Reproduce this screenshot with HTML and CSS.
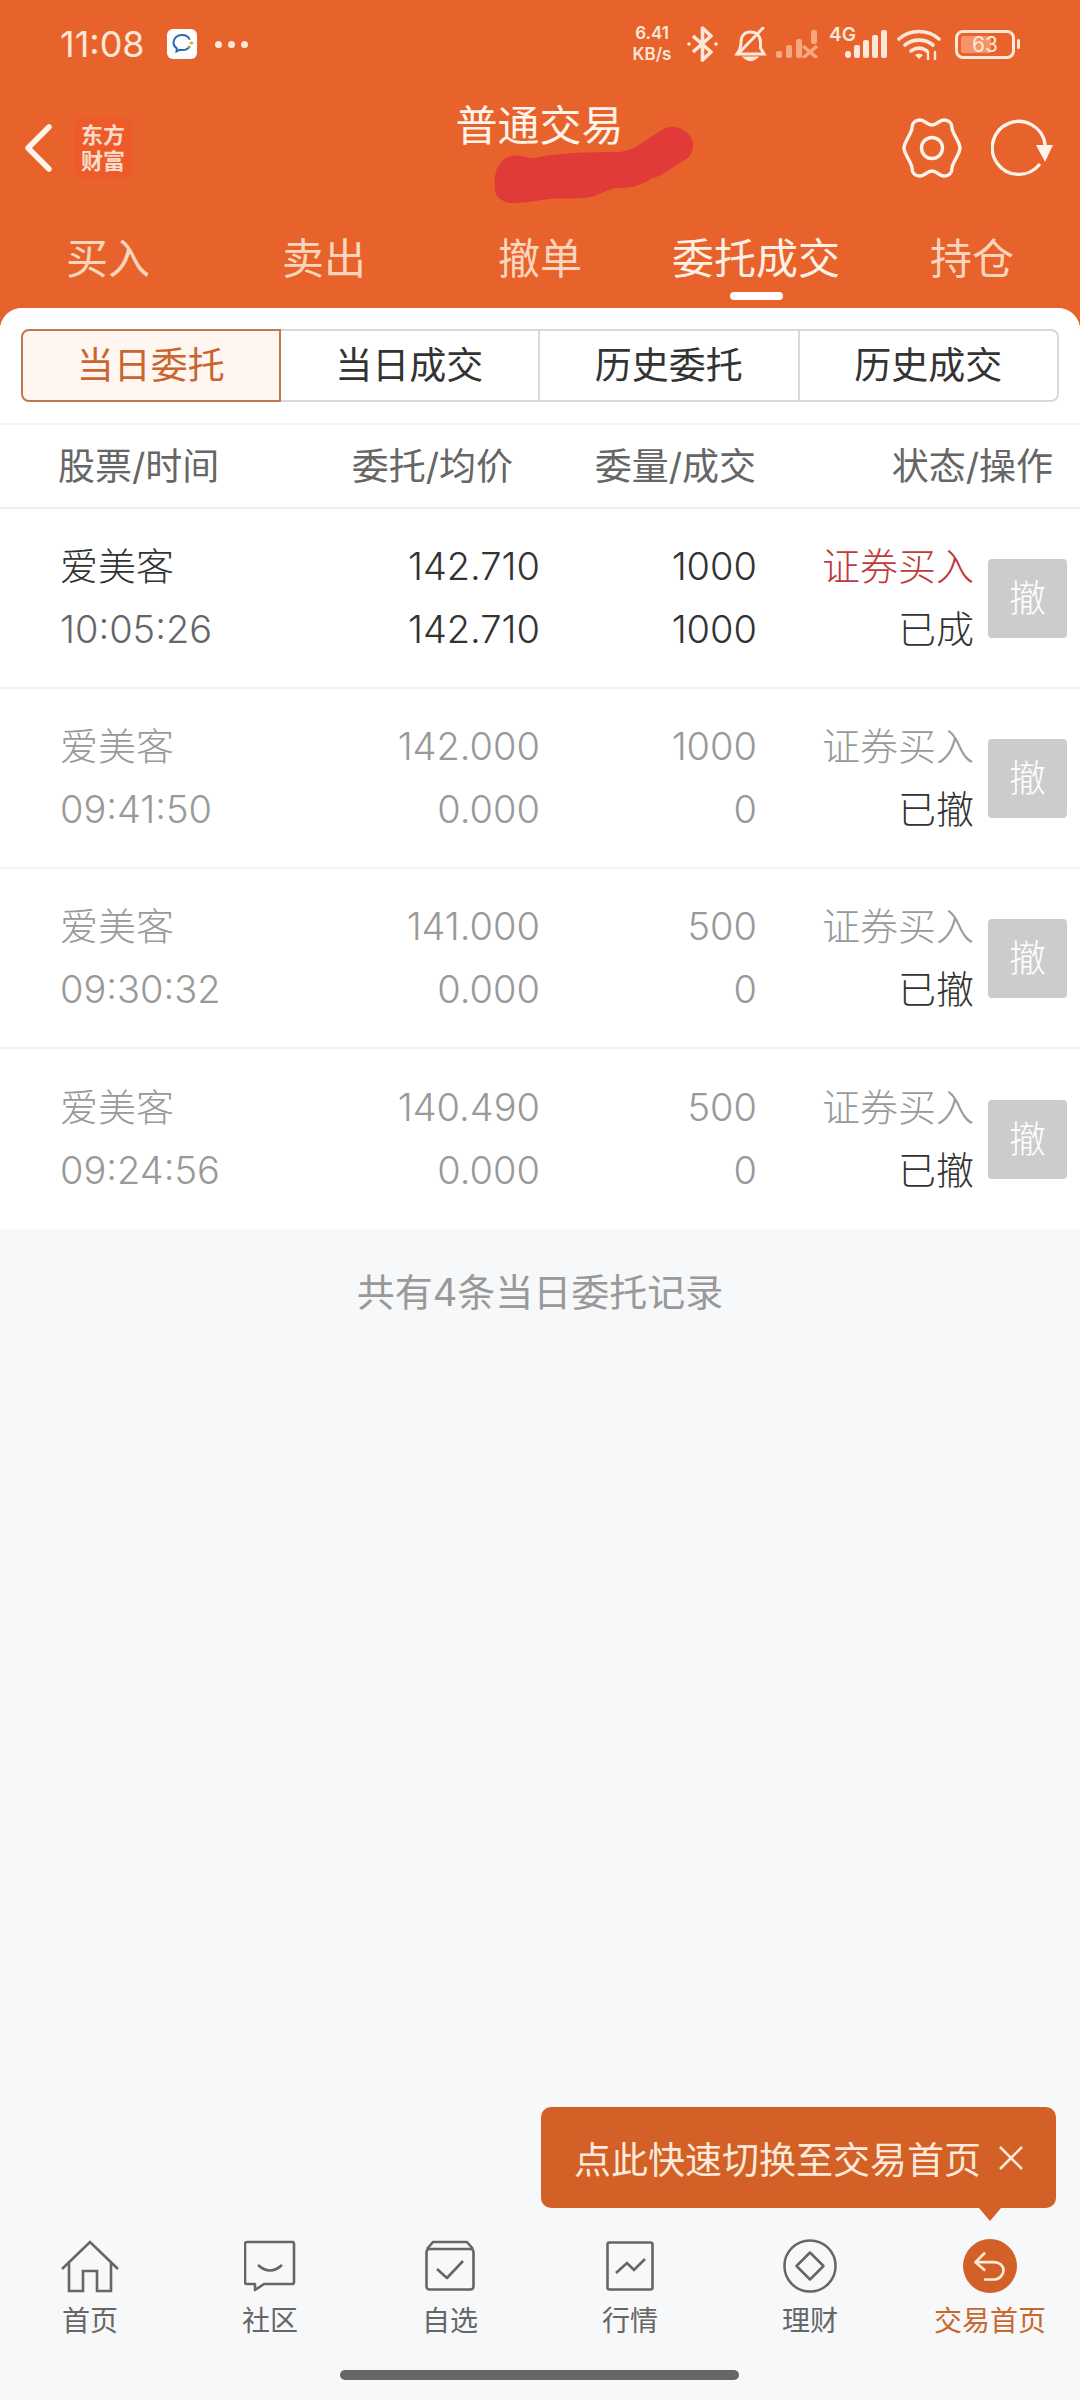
FILE: index.html
```html
<!DOCTYPE html>
<html lang="zh-CN">
<head>
  <meta charset="UTF-8" />
  <title>普通交易</title>
  <link rel="stylesheet" href="styles.css">
</head>
<body>
  <div class="app">
    <header class="top">
      <div class="statusbar">
        <span class="time">11:08</span>
        <svg class="qq" width="30" height="30" viewBox="0 0 30 30">
          <rect width="30" height="30" rx="6" fill="#fff"/>
          <path d="M15 6c-5 0-8.500 3.200-8.500 7.500 0 2.600 1.300 4.700 3.400 6l-.4 3 3.200-1.700c.9.200 1.800.3 2.800.3 3 0 6-1.500 7.300-4" fill="none" stroke="#2b6cb5" stroke-width="2"/>
          <path d="M15 6c3.500 0 6.500 1.800 7.800 4.700" fill="none" stroke="#2b6cb5" stroke-width="2"/>
          <path d="M22 14l2.500-2 2.500 2-2.500 2z" fill="#e3b23c"/>
          <path d="M20 18l2-1.600 2 1.600-2 1.600z" fill="#69b26a"/>
        </svg>
        <span class="dots"><i></i><i></i><i></i></span>
        <div class="status-right">
          <div class="speed"><span>6.41</span><span>KB/s</span></div>
          <svg class="bt" width="33" height="36" viewBox="0 0 33 36" fill="none" stroke="#fde7d8" stroke-width="3.600" stroke-linejoin="round">
            <path d="M7 10l18 16-8.500 8V2L25 10 7 26"/>
            <circle cx="3" cy="18" r="1.800" fill="#fde7d8" stroke="none"/>
            <circle cx="30" cy="18" r="1.800" fill="#fde7d8" stroke="none"/>
          </svg>
          <svg class="bell" width="33" height="35" viewBox="0 0 33 35" fill="none" stroke="#fde7d8" stroke-width="3">
            <path d="M3 27h27l-3.500-6V15c0-6-4-10-10-10S7 9 7 15c0 4-1 8-4 12z"/>
            <path d="M29 1L4 27" stroke-linecap="round"/>
            <path d="M12 31q4.500 3.500 9 0z" fill="#fde7d8"/>
          </svg>
          <svg class="sig-off" width="42" height="28" viewBox="0 0 42 28" fill="#f5a77f">
            <rect x="0" y="21" width="6" height="7" rx="2"/>
            <rect x="10" y="15" width="6" height="13" rx="2"/>
            <rect x="20" y="9" width="6" height="19" rx="2"/>
            <rect x="35" y="0" width="6" height="14" rx="2"/>
            <path d="M27 16l14 12M41 16L27 28" stroke="#f5a77f" stroke-width="3.500"/>
          </svg>
          <div class="sig-on">
            <span class="net">4G</span>
            <svg width="42" height="28" viewBox="0 0 42 28" fill="#fde7d8">
              <rect x="0" y="21" width="6" height="7" rx="3"/>
              <rect x="9" y="15" width="6" height="13" rx="2"/>
              <rect x="18" y="10" width="6" height="18" rx="2"/>
              <rect x="27" y="5" width="6" height="23" rx="2"/>
              <rect x="36" y="0" width="6" height="28" rx="2"/>
            </svg>
          </div>
          <svg class="wifi" width="44" height="31" viewBox="0 0 44 31" fill="none" stroke="#fde7d8" stroke-width="3.600" stroke-linecap="round">
            <path d="M2 10C13 0 31 0 42 10"/>
            <path d="M8 16c8-6.500 20-6.500 28 0"/>
            <path d="M14 22c5-3.500 11-3.500 16 0"/>
            <path d="M18 26l4 4 4-4q-4-3-8 0z" fill="#fde7d8" stroke="none"/>
            <path d="M31 23v7M38 23v7" stroke-width="2.400"/>
          </svg>
          <div class="battery">
            <div class="battery-box"><i class="battery-fill"></i><span>63</span></div>
            <i class="battery-nub"></i>
          </div>
        </div>
      </div>

      <nav class="navbar">
        <div class="nav-left">
          <svg width="28" height="48" viewBox="0 0 28 48" fill="none" stroke="#fff3ea" stroke-width="5.500" stroke-linecap="round" stroke-linejoin="round">
            <path d="M25 3L4 24l21 21"/>
          </svg>
          <div class="logo"><span>东方</span><span>财富</span></div>
        </div>
        <h1 class="title">普通交易</h1>
        <div class="nav-right">
          <svg width="60" height="60" viewBox="-30 -30 60 60" fill="none" stroke="#fff3ea" stroke-width="3.400" stroke-linejoin="round">
            <path d="M0-23C5-23 7-28 12-28C17-28 20-25 20-20C20-15 28-6 28 0C28 6 20 15 20 20C20 25 17 28 12 28C7 28 5 23 0 23C-5 23-7 28-12 28C-17 28-20 25-20 20C-20 15-28 6-28 0C-28-6-20-15-20-20C-20-25-17-28-12-28C-7-28-5-23 0-23z"/>
            <circle r="10.500"/>
          </svg>
          <svg width="64" height="60" viewBox="0 0 64 60" fill="none" stroke="#fff3ea" stroke-width="3.400" stroke-linecap="round">
            <path d="M48 47A26.500 26.500 0 1 1 54 26"/>
            <path d="M45 27h17l-8 17z" fill="#fff3ea" stroke="none"/>
          </svg>
        </div>
      </nav>

      <div class="maintabs">
        <span>买入</span>
        <span>卖出</span>
        <span>撤单</span>
        <span class="on">委托成交</span>
        <span>持仓</span>
      </div>
    </header>

    <svg class="scribble" width="210" height="90" viewBox="0 0 210 90">
      <path d="M21 36C30 34 38 39 46 38C62 33 100 32 125 32C134 32 140 30 146 27C158 20 170 9 179 7C190 5 203 14 203 25C203 32 200 37 195 40C180 48 174 56 162 58C150 67 138 68 125 68C112 72 103 78 93 78C80 79 68 78 60 79C48 80 38 83 23 83C12 83 5 76 5 70C5 64 4 60 5 57C6 47 12 38 21 36z" fill="#e03b39"/>
    </svg>

    <main class="card">
      <section class="panel">
        <div class="segments">
          <div class="seg active">当日委托</div>
          <div class="seg">当日成交</div>
          <div class="seg">历史委托</div>
          <div class="seg">历史成交</div>
        </div>

        <div class="thead">
          <span>股票/时间</span>
          <span class="r">委托/均价</span>
          <span class="r">委量/成交</span>
          <span class="r">状态/操作</span>
        </div>

        <div class="row">
          <div class="name"><div>爱美客</div><div class="clock">10:05:26</div></div>
          <div class="r"><div>142.710</div><div>142.710</div></div>
          <div class="r"><div>1000</div><div>1000</div></div>
          <div class="r"><div class="buy">证券买入</div><div>已成</div></div>
          <button class="cancel">撤</button>
        </div>
        <div class="row dim">
          <div class="name"><div>爱美客</div><div class="clock">09:41:50</div></div>
          <div class="r"><div>142.000</div><div>0.000</div></div>
          <div class="r"><div>1000</div><div>0</div></div>
          <div class="r"><div>证券买入</div><div class="state">已撤</div></div>
          <button class="cancel">撤</button>
        </div>
        <div class="row dim">
          <div class="name"><div>爱美客</div><div class="clock">09:30:32</div></div>
          <div class="r"><div>141.000</div><div>0.000</div></div>
          <div class="r"><div>500</div><div>0</div></div>
          <div class="r"><div>证券买入</div><div class="state">已撤</div></div>
          <button class="cancel">撤</button>
        </div>
        <div class="row dim">
          <div class="name"><div>爱美客</div><div class="clock">09:24:56</div></div>
          <div class="r"><div>140.490</div><div>0.000</div></div>
          <div class="r"><div>500</div><div>0</div></div>
          <div class="r"><div>证券买入</div><div class="state">已撤</div></div>
          <button class="cancel">撤</button>
        </div>
      </section>
      <p class="total">共有4条当日委托记录</p>
    </main>

    <div class="tip">
      <span>点此快速切换至交易首页</span>
      <svg width="26" height="26" viewBox="0 0 26 26" stroke="#fdeadb" stroke-width="2.600">
        <path d="M2 2l22 22M24 2L2 24"/>
      </svg>
    </div>

    <footer class="tabbar">
      <div class="tab">
        <svg width="58" height="52" viewBox="0 0 58 52" fill="none" stroke="#666" stroke-width="2.600">
          <path d="M1 29L29 2l28 27"/>
          <path d="M8 23v28h14V31h14v20h14V23"/>
        </svg>
        <span>首页</span>
      </div>
      <div class="tab">
        <svg width="52" height="52" viewBox="0 0 52 52" fill="none" stroke="#666" stroke-width="2.600" stroke-linejoin="round">
          <path d="M3 2h46a2 2 0 0 1 1 2v38a2 2 0 0 1-1 2H20L11 50v-6H3a2 2 0 0 1-2-2V4a2 2 0 0 1 2-2z"/>
          <path d="M14 25q12 11 24 0"/>
        </svg>
        <span>社区</span>
      </div>
      <div class="tab">
        <svg width="50" height="50" viewBox="0 0 50 50" fill="none" stroke="#666" stroke-width="2.600" stroke-linejoin="round">
          <rect x="1.500" y="8" width="47" height="40.500" rx="3"/>
          <path d="M2 8l6-7h34l6 7"/>
          <path d="M12 28l10 9 16-17"/>
        </svg>
        <span>自选</span>
      </div>
      <div class="tab">
        <svg width="48" height="50" viewBox="0 0 48 50" fill="none" stroke="#666" stroke-width="2.600">
          <rect x="1.500" y="1.500" width="45" height="47" rx="2"/>
          <path d="M10 32l11-10 7 7 11-11"/>
        </svg>
        <span>行情</span>
      </div>
      <div class="tab">
        <svg width="56" height="56" viewBox="0 0 56 56" fill="none" stroke="#666" stroke-width="2.600" stroke-linejoin="round">
          <circle cx="28" cy="28" r="26.500"/>
          <path d="M28 14l14 14-14 14-14-14z"/>
        </svg>
        <span>理财</span>
      </div>
      <div class="tab current">
        <svg width="56" height="56" viewBox="0 0 56 56" fill="none" stroke="#fdeadb" stroke-width="2.800" stroke-linecap="round" stroke-linejoin="round">
          <circle cx="28" cy="28" r="28" fill="#d26027" stroke="none"/>
          <path d="M22 15l-9 9 9 8"/>
          <path d="M14 24h18c6 0 10 4 10 8.500S38 42 32 42h-9"/>
        </svg>
        <span>交易首页</span>
      </div>
    </footer>
    <div class="homebar"><i></i></div>
  </div>
</body>
</html>
```

FILE: styles.css
```css
* { box-sizing: border-box; }
html, body { margin: 0; padding: 0; }
body {
  font-family: Inter, "Noto Sans CJK SC", sans-serif;
  font-size: 37px;
  color: #333;
  background: #f7f8fa;
}
.app {
  position: relative;
  width: 1080px;
  height: 2400px;
  display: flex;
  flex-direction: column;
  background: #e8622c;
  overflow: hidden;
}

/* header */
.top { color: #fde7d8; }
.statusbar {
  height: 88px;
  display: flex;
  align-items: center;
  padding: 0 60px;
}
.time { font-size: 36px; margin-right: 22px; }
.qq { margin-right: 18px; }
.dots { display: flex; gap: 6px; }
.dots i { width: 7px; height: 7px; border-radius: 50%; background: #fde7d8; }
.status-right {
  margin-left: auto;
  display: flex;
  align-items: center;
}
.speed {
  display: flex;
  flex-direction: column;
  font-size: 17px;
  font-weight: 600;
  line-height: 21px;
  margin-right: 10px;
  width: 48px;
  text-align: center;
}
.bell { margin: 0 9px 0 15px; }
.sig-on { display: flex; align-items: flex-end; margin: 0 10px 0 11px; position: relative; }
.net {
  position: absolute;
  left: 0;
  top: -7px;
  font-size: 19px;
  font-weight: 600;
}
.sig-on svg { margin-left: 16px; }
.wifi { margin-right: 14px; }
.battery { display: flex; align-items: center; gap: 2px; }
.battery-box {
  position: relative;
  width: 60px;
  height: 29px;
  border: 3px solid #fde7d8;
  border-radius: 8px;
  display: flex;
  align-items: center;
  justify-content: center;
  font-size: 21px;
}
.battery-box span { position: relative; }
.battery-fill {
  position: absolute;
  left: 3px;
  top: 3px;
  bottom: 3px;
  width: 30px;
  background: #f59468;
  border-radius: 2px;
}
.battery-nub { width: 3px; height: 10px; background: #fde7d8; border-radius: 2px; }

.navbar {
  height: 134px;
  display: grid;
  grid-template-columns: 1fr auto 1fr;
  padding: 0 25px 0 24px;
}
.nav-left { display: flex; align-items: center; gap: 22px; height: 120px; }
.logo {
  width: 58px;
  height: 60px;
  background: #ee5a2a;
  border-radius: 9px;
  color: #fbdcc9;
  font-size: 22px;
  font-weight: 700;
  line-height: 26px;
  display: flex;
  flex-direction: column;
  align-items: center;
  justify-content: center;
}
.title {
  margin: 14px 0 0;
  font-size: 42px;
  font-weight: 400;
  line-height: 48px;
  color: #fff3ea;
}
.nav-right {
  display: flex;
  justify-content: flex-end;
  align-items: center;
  gap: 29px;
  height: 120px;
}
.maintabs {
  height: 86px;
  display: grid;
  grid-template-columns: repeat(5, 1fr);
  text-align: center;
  font-size: 42px;
  line-height: 74px;
  color: #fad5bc;
}
.maintabs .on { position: relative; color: #fff0e5; }
.maintabs .on::after {
  content: "";
  position: absolute;
  left: 50%;
  bottom: 8px;
  width: 53px;
  height: 8px;
  margin-left: -26px;
  background: #fff;
  border-radius: 4px;
}
.scribble { position: absolute; left: 490px; top: 120px; }

/* card */
.card {
  flex: 1;
  background: #f7f8fa;
  border-radius: 22px 22px 0 0;
  overflow: hidden;
}
.panel { background: #fff; }
.segments {
  display: grid;
  grid-template-columns: repeat(4, 1fr);
  margin: 0 21px;
  padding-top: 21px;
}
.seg {
  height: 73px;
  line-height: 70px;
  text-align: center;
  border: 2px solid #d8d8d8;
  border-left: 0;
}
.seg:last-child { border-radius: 0 8px 8px 0; }
.seg.active {
  color: #c9652f;
  background: #fff6f2;
  border: 2px solid #bd7a50;
  border-radius: 8px 0 0 8px;
}
.thead {
  margin-top: 21px;
  height: 86px;
  border-top: 2px solid #f5f5f5;
  border-bottom: 2px solid #eee;
  display: grid;
  grid-template-columns: 243px 212px 243px 297px;
  padding: 0 0 4px 58px;
  align-items: center;
  color: #666;
}
.r { text-align: right; }
.row {
  height: 180px;
  display: grid;
  grid-template-columns: 240px 240px 217px 217px 79px;
  padding: 0 0 0 60px;
  align-items: center;
  font-size: 38px;
  font-weight: 300;
  line-height: 63px;
  border-bottom: 2px solid #f2f2f2;
}
.row:last-child { border-bottom: 0; }
.clock { color: #666; }
.buy { color: #c0393b; }
.dim { color: #999; }
.dim .clock { color: #999; }
.state { color: #333; }
.cancel {
  margin-left: 14px;
  width: 79px;
  height: 79px;
  padding: 0;
  border: 0;
  border-radius: 4px;
  background: #ccc;
  color: #fff;
  font: inherit;
  font-size: 37px;
}
.total {
  margin: 38px 0 0;
  text-align: center;
  color: #999;
  font-size: 38px;
  line-height: 50px;
}

/* tooltip over the tab bar */
.tip {
  position: absolute;
  left: 541px;
  top: 2107px;
  width: 515px;
  height: 101px;
  background: #d26027;
  border-radius: 10px;
  color: #fdeadb;
  display: flex;
  align-items: center;
  justify-content: space-between;
  padding: 0 32px 0 33px;
  font-size: 37px;
}
.tip::after {
  content: "";
  position: absolute;
  right: 55px;
  bottom: -13px;
  width: 0;
  height: 0;
  border-left: 11px solid transparent;
  border-right: 11px solid transparent;
  border-top: 13px solid #d26027;
}

/* bottom tabs */
.tabbar {
  position: absolute;
  left: 0;
  right: 0;
  top: 2239px;
  display: grid;
  grid-template-columns: repeat(6, 180px);
}
.tab {
  display: flex;
  flex-direction: column;
  align-items: center;
  height: 100px;
  color: #666;
  font-size: 28px;
}
.tab svg { display: block; height: 56px; }
.tab span { margin-top: 10px; line-height: 36px; }
.tab.current { color: #c9672f; }
.homebar {
  position: absolute;
  left: 340px;
  top: 2370px;
}
.homebar i {
  display: block;
  width: 399px;
  height: 10px;
  background: #666;
  border-radius: 5px;
}
```
